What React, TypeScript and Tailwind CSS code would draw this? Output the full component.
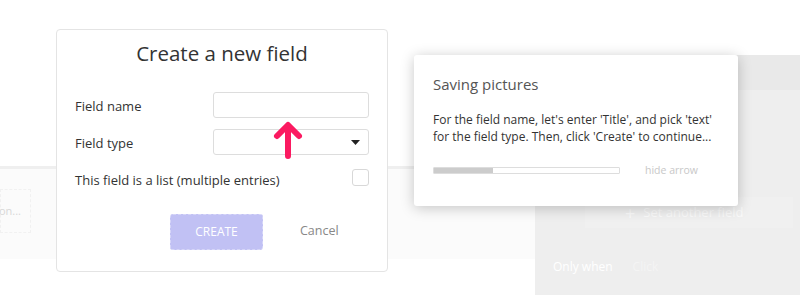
const font = { fontFamily: '"Open Sans", "Noto Sans", sans-serif' };

function Background() {
  return (
    <div className="grid h-full grid-cols-[535px_1fr]">
      <div className="flex flex-col">
        <div className="h-[166px] bg-white" />
        <div className="h-[3px] bg-[#efefef]" />
        <div className="flex h-[90px] flex-col bg-[#fbfbfb] pt-[20px]">
          <div className="flex h-[44px] w-[31px] items-center justify-end border border-dashed border-[#f1f1f1] pr-[9px] text-[11px] text-[#d8d8d8]">
            on...
          </div>
        </div>
        <div className="flex-1 bg-white" />
      </div>
      <div className="flex flex-col">
        <div className="h-[55px] bg-white" />
        <div className="flex flex-1 flex-col bg-[#eeeeee]">
          <div className="h-[35px] bg-[#e9e9e9]" />
          <div className="mt-[107px] ml-[50px] flex h-[31px] w-[208px] items-center bg-[#f0f0f0] pl-[40px] text-[13px] text-[#fafafa]">
            <span className="mr-2 text-[18px] leading-none">+</span>
            Set another field
          </div>
          <div className="mt-[30px] flex gap-[20px] pl-[18px] text-[12px]">
            <span className="text-white">Only when</span>
            <span className="text-[#f4f4f4]">Click</span>
          </div>
        </div>
      </div>
    </div>
  );
}

function Arrow() {
  return (
    <svg width="34" height="40" viewBox="0 0 34 40" className="absolute left-[271px] top-[120px]">
      <path
        d="M17 36 V7 M6 16 L17 5 L28 16"
        fill="none"
        stroke="#fb1a61"
        strokeWidth="6"
        strokeLinecap="round"
        strokeLinejoin="round"
      />
    </svg>
  );
}

export default function App() {
  return (
    <div className="relative h-[295px] w-[800px] overflow-hidden bg-white text-[#333]" style={font}>
      <Background />

      <div className="absolute left-[56px] top-[29px] flex h-[243px] w-[332px] flex-col rounded-[4px] border border-[#e4e4e4] bg-white px-[18px]">
        <h2 className="mt-[8px] text-center text-[20.5px] leading-[30px] text-[#333]">Create a new field</h2>
        <div className="mt-[24px] flex items-center justify-between">
          <span className="translate-y-[2px] text-[13px]">Field name</span>
          <div className="h-[26px] w-[156px] rounded-[3px] border border-[#dddddd]" />
        </div>
        <div className="mt-[11px] flex items-center justify-between">
          <span className="translate-y-[2px] text-[13px]">Field type</span>
          <div className="flex h-[26px] w-[156px] items-center justify-end rounded-[3px] border border-[#dddddd] pr-[8px]">
            <svg width="9" height="5" viewBox="0 0 9 5">
              <path d="M0 0 H9 L4.5 5 Z" fill="#222" />
            </svg>
          </div>
        </div>
        <div className="mt-[13px] flex items-center justify-between">
          <span className="translate-y-[3px] text-[13px]">This field is a list (multiple entries)</span>
          <div className="h-[17px] w-[17px] rounded-[3px] border border-[#d8d8d8]" />
        </div>
        <div className="mt-[26px] flex items-center">
          <button className="ml-[95px] h-[36px] w-[93px] rounded-[3px] border border-dashed border-[#d6d6f8] bg-[#c1c1f4] text-[12px] text-white">
            CREATE
          </button>
          <span className="ml-[37px] text-[12.5px] text-[#888]">Cancel</span>
        </div>
      </div>

      <Arrow />

      <div className="absolute left-[414px] top-[55px] flex h-[151px] w-[324px] flex-col rounded-[3px] bg-white px-[19px] shadow-[0_2px_14px_rgba(0,0,0,0.22)]">
        <div className="mt-[18px] text-[15px] text-[#555]">Saving pictures</div>
        <p className="mt-[15px] text-[12px] leading-[17px] text-[#333]">
          For the field name, let's enter 'Title', and pick 'text'
          <br />
          for the field type. Then, click 'Create' to continue...
        </p>
        <div className="mt-[18px] flex items-center">
          <div className="h-[7px] w-[187px] rounded-[1px] border border-[#dddddd]">
            <div className="h-full w-[59px] bg-[#cccccc]" />
          </div>
          <span className="ml-[25px] text-[10.5px] text-[#c8c8c8]">hide arrow</span>
        </div>
      </div>
    </div>
  );
}
